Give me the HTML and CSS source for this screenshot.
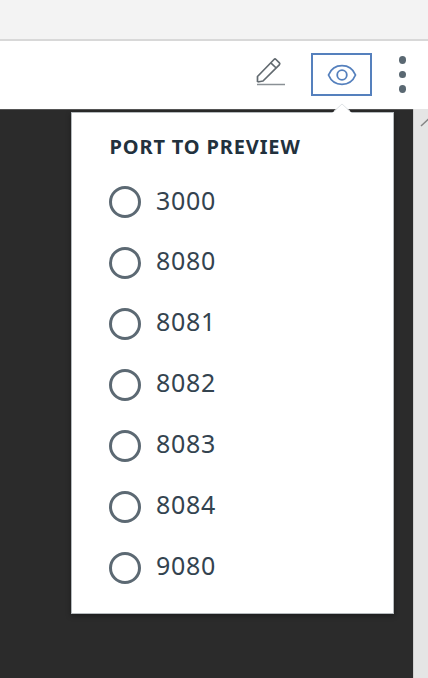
FILE: index.html
```html
<!DOCTYPE html>
<html lang="en">
<head>
<meta charset="utf-8">
<title>Port to preview</title>
<link rel="stylesheet" href="styles.css">
</head>
<body>
<div class="tabstrip"></div>
<header class="toolbar">
  <button class="edit" aria-label="Edit">
    <svg width="32" height="32" viewBox="0 0 32 32" fill="none" stroke="#626a70">
      <path d="M2.5 27V21.5L19 4.5Q20 3.5 21 4.5L24.4 7.8Q25.3 8.8 24.3 9.8L8 26L2.5 27M15.8 7.8L21.2 13" stroke-width="1.7" stroke-linejoin="round"/>
      <path d="M2 29.5H30" stroke="#8a9095" stroke-width="1.5"/>
    </svg>
  </button>
  <button class="preview" aria-label="Preview">
    <svg width="30" height="22" viewBox="0 0 30 22" fill="none" stroke="#5580bd" stroke-width="1.8">
      <path d="M1.5 11C4 5 9 1.7 15 1.7S26 5 28.5 11C26 17 21 20.3 15 20.3S4 17 1.5 11Z"/>
      <circle cx="15" cy="11" r="4.8"/>
    </svg>
  </button>
  <button class="more" aria-label="More"><i></i><i></i><i></i></button>
</header>
<main class="workspace">
  <div class="terminal">
    <section class="panel">
      <svg class="caret" width="22" height="11" viewBox="0 0 22 11"><path d="M0 11L11 1L22 11Z" fill="#fff"/><path d="M3 8.3L11 1L19 8.3" fill="none" stroke="#e0e4e7"/></svg>
      <h1>PORT TO PREVIEW</h1>
      <ul>
        <li><span class="radio"></span><span class="port">3000</span></li>
        <li><span class="radio"></span><span class="port">8080</span></li>
        <li><span class="radio"></span><span class="port">8081</span></li>
        <li><span class="radio"></span><span class="port">8082</span></li>
        <li><span class="radio"></span><span class="port">8083</span></li>
        <li><span class="radio"></span><span class="port">8084</span></li>
        <li><span class="radio"></span><span class="port">9080</span></li>
      </ul>
    </section>
  </div>
  <aside class="scrollbar"><svg width="15" height="20" viewBox="0 0 15 20" fill="none" stroke="#858585" stroke-width="1.5"><path d="M7 17L15 9.5"/></svg></aside>
</main>
</body>
</html>
```
FILE: styles.css
```css
* { box-sizing: border-box; }
body {
  margin: 0;
  height: 678px;
  overflow: hidden;
  display: flex;
  flex-direction: column;
  background: #fff;
  font-family: "Noto Sans", "Liberation Sans", sans-serif;
  color: #33434f;
}
.tabstrip {
  flex: 0 0 41px;
  background: #f3f3f3;
  border-bottom: 2px solid #d8d8d8;
}
.toolbar {
  flex: 0 0 68px;
  display: flex;
  align-items: flex-start;
  justify-content: flex-end;
  padding: 12px 21.5px 0 0;
}
button {
  padding: 0;
  border: 0;
  background: none;
  display: flex;
  align-items: center;
  justify-content: center;
}
.edit { margin: 1.5px 24.5px 0 0; }
.preview {
  width: 61px;
  height: 43px;
  border: 2px solid #5580bd;
}
.more {
  flex-direction: column;
  gap: 7px;
  width: 8px;
  height: 43px;
  margin-left: 26.5px;
}
.more i {
  width: 7px;
  height: 7.4px;
  flex: none;
  border-radius: 50%;
  background: #5a6872;
}
.workspace {
  flex: 1;
  display: flex;
  background: #2b2b2b;
}
.terminal {
  flex: 1;
  padding: 2px 19px 0 71px;
  border-top: 1px solid #555;
}
.panel {
  position: relative;
  height: 502px;
  padding: 24px 0 0 37px;
  background: #fff;
  border: 1px solid #b5babd;
  box-shadow: 0 2px 5px rgba(0, 0, 0, .35);
}
.caret {
  position: absolute;
  top: -10px;
  left: 259px;
}
h1 {
  margin: 0 0 29px .5px;
  font-size: 20px;
  line-height: 20px;
  font-weight: 700;
  letter-spacing: .85px;
  white-space: nowrap;
  color: #22313d;
}
ul { margin: 0; padding: 0; list-style: none; }
li {
  display: flex;
  align-items: center;
  height: 32px;
  margin-bottom: 28.95px;
}
.radio {
  width: 32px;
  height: 32px;
  border: 3px solid #5c6973;
  border-radius: 50%;
}
.port {
  margin: -5px 0 0 15px;
  font-size: 25px;
  line-height: 32px;
  letter-spacing: .7px;
}
.scrollbar {
  width: 15px;
  background: #e5e5e5;
  border-left: 1px solid #d0d0d0;
}
```
